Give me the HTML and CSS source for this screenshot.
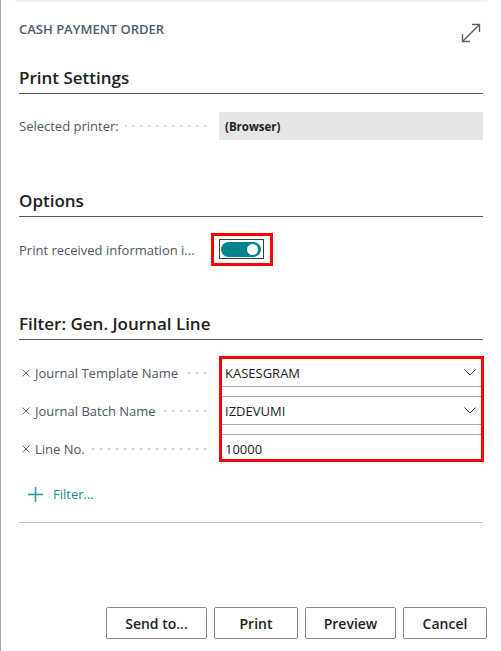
FILE: index.html
```html
<!DOCTYPE html>
<html lang="en">
<head>
<meta charset="utf-8">
<title>Cash Payment Order</title>
<link rel="stylesheet" href="styles.css">
</head>
<body>
<div class="dialog">
  <div class="strip"></div>
  <div class="header">
    <div class="title">CASH PAYMENT ORDER</div>
    <svg class="expand" viewBox="0 0 20 20" aria-hidden="true">
      <line x1="1.5" y1="18.5" x2="18.5" y2="1.5"/>
      <polyline points="11,1.5 18.5,1.5 18.5,9"/>
      <polyline points="1.5,11 1.5,18.5 9,18.5"/>
    </svg>
  </div>

  <h2 class="section-title st-print">Print Settings</h2>
  <div class="row printer-row">
    <div class="label-cell"><span class="label">Selected printer:</span><span class="leader"></span></div>
    <div class="readonly">(Browser)</div>
  </div>

  <h2 class="section-title st-options">Options</h2>
  <div class="row toggle-row">
    <div class="label-cell"><span class="label">Print received information i...</span></div>
    <div class="highlight-toggle">
      <div class="toggle-frame"><div class="toggle"><span class="knob"></span></div></div>
    </div>
  </div>

  <h2 class="section-title st-filter">Filter: Gen. Journal Line</h2>
  <div class="filter-grid">
    <div class="filter-labels">
      <div class="filter-label">
        <svg class="xicon" viewBox="0 0 8 8" aria-hidden="true"><line x1="0.5" y1="0.5" x2="7.5" y2="7.5"/><line x1="7.5" y1="0.5" x2="0.5" y2="7.5"/></svg>
        <span class="label">Journal Template Name</span><span class="leader"></span>
      </div>
      <div class="filter-label">
        <svg class="xicon" viewBox="0 0 8 8" aria-hidden="true"><line x1="0.5" y1="0.5" x2="7.5" y2="7.5"/><line x1="7.5" y1="0.5" x2="0.5" y2="7.5"/></svg>
        <span class="label">Journal Batch Name</span><span class="leader"></span>
      </div>
      <div class="filter-label">
        <svg class="xicon" viewBox="0 0 8 8" aria-hidden="true"><line x1="0.5" y1="0.5" x2="7.5" y2="7.5"/><line x1="7.5" y1="0.5" x2="0.5" y2="7.5"/></svg>
        <span class="label">Line No.</span><span class="leader"></span>
      </div>
    </div>
    <div class="highlight-fields">
      <div class="field f1"><span>KASESGRAM</span>
        <svg class="chev" viewBox="0 0 12 7" aria-hidden="true"><polyline points="0.5,0.5 6,6 11.5,0.5"/></svg>
      </div>
      <div class="field f2"><span>IZDEVUMI</span>
        <svg class="chev" viewBox="0 0 12 7" aria-hidden="true"><polyline points="0.5,0.5 6,6 11.5,0.5"/></svg>
      </div>
      <div class="field f3"><span>10000</span></div>
    </div>
  </div>

  <div class="add-filter">
    <svg class="plus" viewBox="0 0 15 15" aria-hidden="true"><line x1="7.5" y1="0" x2="7.5" y2="15"/><line x1="0" y1="7.5" x2="15" y2="7.5"/></svg>
    <span>Filter...</span>
  </div>
  <div class="separator"></div>

  <div class="footer">
    <button class="btn btn-send">Send to...</button>
    <button class="btn btn-print">Print</button>
    <button class="btn btn-preview">Preview</button>
    <button class="btn btn-cancel">Cancel</button>
  </div>
</div>
</body>
</html>
```

FILE: styles.css
```css
* { box-sizing: border-box; }

body {
  margin: 0;
  background: #fff;
  color: #212121;
  font-family: "Segoe UI", "Open Sans", "Noto Sans", sans-serif;
}

.dialog {
  height: 651px;
  border-left: 1px solid #a6a6a6;
  padding: 0 18px;
  display: flex;
  flex-direction: column;
}

.strip {
  height: 2px;
  margin: 0 -4px;
  background: #f3f3f3;
  flex: none;
}

.header {
  display: flex;
  justify-content: space-between;
  align-items: flex-start;
  padding-top: 19px;
  flex: none;
}

.title {
  font-size: 13px;
  font-weight: 600;
  line-height: 17px;
  color: #505c6d;
}

.expand {
  width: 20px;
  height: 20px;
  margin-top: 2px;
  margin-right: 2px;
  fill: none;
  stroke: #5f5f5f;
  stroke-width: 1.4;
}

.section-title {
  margin: 0;
  font-size: 17px;
  font-weight: 600;
  line-height: 24px;
  padding-bottom: 3px;
  border-bottom: 1px solid #4f5a64;
  color: #212121;
  flex: none;
}

.st-print { margin-top: 23px; }
.st-options { margin-top: 49px; }
.st-filter { margin-top: 46px; }

.row {
  display: flex;
  align-items: center;
  flex: none;
}

.label-cell {
  width: 200px;
  flex: none;
  display: flex;
  align-items: center;
  padding-right: 7px;
}

.label {
  font-size: 13px;
  color: #4c5666;
  white-space: nowrap;
}

.leader {
  flex: 1;
  height: 2px;
  margin-left: 6px;
  background-image: linear-gradient(to right, #cfcfcf 0 2px, transparent 2px 8px);
  background-size: 8px 2px;
  background-repeat: repeat-x;
  background-position: right center;
}

.printer-row {
  margin-top: 18px;
  height: 28px;
}

.readonly {
  flex: 1;
  height: 28px;
  background: #e6e6e6;
  font-size: 11.5px;
  font-weight: 700;
  color: #212121;
  padding-left: 6px;
  display: flex;
  align-items: center;
}

.toggle-row {
  margin-top: 16px;
  height: 33px;
}

.highlight-toggle {
  margin-left: -8px;
  width: 62px;
  height: 33px;
  border: 3px solid #ff0000;
  padding: 3px 6px 4px 5px;
}

.toggle-frame {
  width: 45px;
  height: 20px;
  border: 1px solid #3b3b3b;
  padding: 2px 1px 1px 1px;
}

.toggle {
  position: relative;
  width: 40px;
  height: 15px;
  border-radius: 8px;
  background: #01848a;
}

.knob {
  position: absolute;
  right: 3px;
  top: 2px;
  width: 11px;
  height: 11px;
  border-radius: 50%;
  background: #fff;
}

.filter-grid {
  display: flex;
  margin-top: 14px;
  flex: none;
}

.filter-labels {
  width: 200px;
  flex: none;
  padding-right: 7px;
}

.filter-label {
  height: 38px;
  display: flex;
  align-items: center;
  padding-left: 3px;
}

.xicon {
  width: 8px;
  height: 8px;
  margin-right: 5px;
  flex: none;
  stroke: #6a6a6a;
  stroke-width: 1;
}

.highlight-fields {
  flex: 1;
  margin-top: 2px;
  margin-right: -1px;
  height: 106px;
  border: 3px solid #ff0000;
  overflow: hidden;
  display: flex;
  flex-direction: column;
  gap: 9px;
}

.field {
  flex: none;
  height: 28px;
  display: flex;
  align-items: center;
  justify-content: space-between;
  padding: 0 5px 0 3px;
  font-size: 13px;
  color: #212121;
}

.f1 { border-bottom: 1px solid #a8a8a8; }
.f2 { height: 29px; border-top: 1px solid #a8a8a8; border-bottom: 1px solid #a8a8a8; }
.f3 { height: 29px; border-top: 1px solid #a8a8a8; }

.chev {
  width: 12px;
  height: 7px;
  fill: none;
  stroke: #3a3a3a;
  stroke-width: 1;
}

.add-filter {
  display: flex;
  align-items: center;
  gap: 10px;
  height: 20px;
  margin-top: 16px;
  padding-left: 9px;
  font-size: 13px;
  color: #1289a0;
  flex: none;
}

.plus {
  width: 15px;
  height: 15px;
  stroke: #2a9aa6;
  stroke-width: 1.6;
}

.separator {
  margin-top: 18px;
  height: 1px;
  background: #c4c4c4;
  flex: none;
}

.footer {
  margin-top: auto;
  margin-right: -4px;
  padding-bottom: 12px;
  display: flex;
  justify-content: flex-end;
  gap: 7px;
}

.btn {
  height: 32px;
  min-width: 84px;
  padding: 0;
  border: 1px solid #8a8886;
  border-radius: 2px;
  background: #fff;
  font-family: inherit;
  font-size: 14px;
  font-weight: 600;
  color: #201f1e;
}

.btn-send { width: 101px; }
.btn-preview { width: 91px; }
.btn-print, .btn-cancel { width: 84px; }
```
